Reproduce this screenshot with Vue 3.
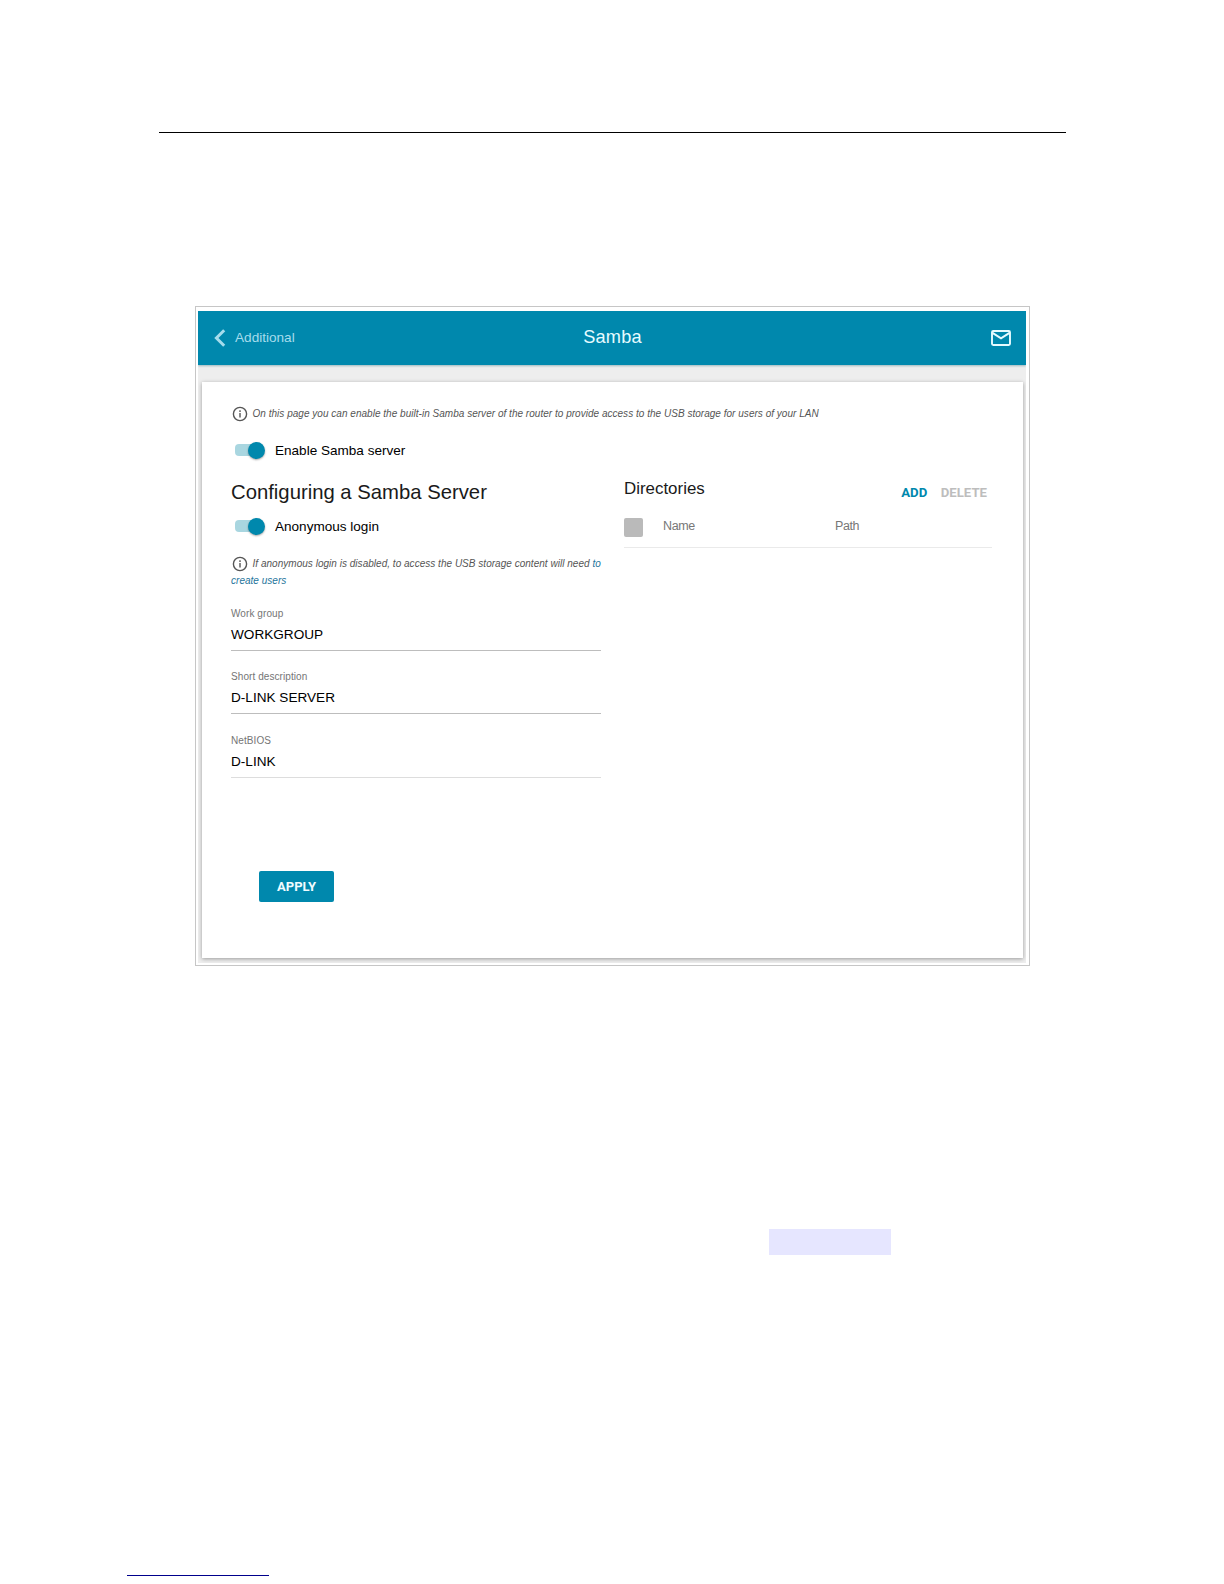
<template>
  <div class="page">
    <div class="page-rule"></div>

    <div class="figure">
      <div class="screen">
        <header class="topbar">
          <div class="back">
            <svg class="back-icon" viewBox="0 0 12 18">
              <path d="M10.2 1.2L2.4 9l7.8 7.8" fill="none" stroke="#a5dcec" stroke-width="3" />
            </svg>
            <span class="back-text">Additional</span>
          </div>
          <h1 class="topbar-title">Samba</h1>
          <div class="topbar-actions">
            <svg class="mail-icon" viewBox="0 0 20 16">
              <rect x="1" y="1" width="18" height="14" rx="1.2" fill="none" stroke="#e6fbff" stroke-width="1.9" />
              <path d="M1.5 2.8L10 8.4l8.5-5.6" fill="none" stroke="#e6fbff" stroke-width="2" />
            </svg>
          </div>
        </header>

        <main class="card">
          <p class="hint hint-page">
            <svg class="info-icon" viewBox="0 0 16 16">
              <circle cx="8" cy="8" r="6.6" />
              <path d="M8 7v4.5M8 4.3v1.6" />
            </svg>
            <span>On this page you can enable the built-in Samba server of the router to provide access to the USB storage for users of your LAN</span>
          </p>

          <div class="switch-row">
            <button class="switch" :class="{ on: enabled }" @click="enabled = !enabled"></button>
            <span>Enable Samba server</span>
          </div>

          <div class="columns">
            <section class="config">
              <h2>Configuring a Samba Server</h2>
              <div class="switch-row">
                <button class="switch" :class="{ on: anonymous }" @click="anonymous = !anonymous"></button>
                <span>Anonymous login</span>
              </div>
              <p class="hint hint-login">
                <svg class="info-icon" viewBox="0 0 16 16">
                  <circle cx="8" cy="8" r="6.6" />
                  <path d="M8 7v4.5M8 4.3v1.6" />
                </svg>
                <span>If anonymous login is disabled, to access the USB storage content will need <a>to<br />create users</a></span>
              </p>
              <div
                v-for="field in fields"
                :key="field.label"
                class="field"
                :class="{ light: field.light }"
              >
                <label>{{ field.label }}</label>
                <div class="value">{{ field.value }}</div>
              </div>
            </section>

            <section class="directories">
              <div class="dir-header">
                <h3>Directories</h3>
                <button class="link-btn">ADD</button>
                <button class="link-btn disabled">DELETE</button>
              </div>
              <div class="dir-table">
                <span class="checkbox"></span>
                <span>Name</span>
                <span>Path</span>
              </div>
            </section>
          </div>

          <button class="apply">APPLY</button>
        </main>
      </div>
    </div>

    <div class="highlight"></div>
    <div class="footnote-rule"></div>
  </div>
</template>

<script setup>
import { ref } from 'vue'

const enabled = ref(true)
const anonymous = ref(true)

const fields = ref([
  { label: 'Work group', value: 'WORKGROUP' },
  { label: 'Short description', value: 'D-LINK SERVER' },
  { label: 'NetBIOS', value: 'D-LINK', light: true }
])
</script>

<style>
body {
  background: #fff;
}
</style>

<style scoped>
.page {
  display: flex;
  flex-direction: column;
  align-items: flex-start;
  box-sizing: border-box;
  width: 1224px;
  height: 1584px;
  padding-top: 132px;
  overflow: hidden;
  font-family: "Liberation Sans", Arial, sans-serif;
  color: #1a1a1a;
}

h1, h2, h3, p {
  margin: 0;
  font-weight: normal;
}

button {
  padding: 0;
  border: none;
  background: none;
  cursor: pointer;
}

.page-rule {
  width: 907px;
  height: 1px;
  margin-left: 159px;
  background: #000;
}

.figure {
  box-sizing: border-box;
  width: 835px;
  height: 660px;
  margin: 173px 0 0 195px;
  padding: 4px 3px 2px 2px;
  border: 1px solid #c6c6c6;
}

.screen {
  height: 652px;
  background: #eee;
  overflow: hidden;
}

/* 顶部栏 */
.topbar {
  display: grid;
  grid-template-columns: 1fr auto 1fr;
  align-items: center;
  height: 54px;
  padding: 0 15px 0 16px;
  box-sizing: border-box;
  background: #0088ad;
  box-shadow: 0 1px 2px rgba(0, 80, 100, 0.35);
}

.back {
  display: flex;
  align-items: center;
  gap: 9px;
}

.back-icon {
  width: 12px;
  height: 18px;
}

.back-text {
  padding-bottom: 2px;
  font-size: 13.6px;
  color: #a5dcec;
}

.topbar-title {
  padding-bottom: 2px;
  font-size: 18.2px;
  letter-spacing: 0.15px;
  line-height: 24px;
  color: #e6fbff;
}

.topbar-actions {
  display: flex;
  justify-content: flex-end;
}

.mail-icon {
  width: 20px;
  height: 16px;
}

.card {
  box-sizing: border-box;
  height: 576px;
  margin: 17px 3px 0 4px;
  padding: 22px 31px 0 29px;
  background: #fff;
  box-shadow: 0 1px 4px rgba(0, 0, 0, 0.35);
}

/* 提示文字 */
.hint {
  font-size: 10px;
  font-style: italic;
  letter-spacing: 0.025px;
  color: #555;
  white-space: nowrap;
}

.hint a {
  color: #25749b;
}

.info-icon {
  width: 16px;
  height: 16px;
  margin: 0 4.5px 0 1px;
  vertical-align: middle;
  fill: none;
  stroke: #555;
  stroke-width: 1.4;
}

.hint-page {
  height: 20px;
  line-height: 20px;
}

.hint-login {
  height: 33px;
  margin-top: 19px;
  line-height: 17px;
}

/* 开关 */
.switch-row {
  display: flex;
  align-items: center;
  gap: 10px;
  height: 20px;
  font-size: 13.55px;
  color: #000;
}

.hint-page + .switch-row {
  margin-top: 16px;
}

.switch {
  display: flex;
  align-items: center;
  width: 30px;
  height: 12px;
  margin-left: 4px;
  border-radius: 4px;
  background: #ccc;
}

.switch.on {
  justify-content: flex-end;
  background: linear-gradient(90deg, #a9d6e0 80%, transparent 80%);
}

.switch::after {
  content: '';
  width: 17px;
  height: 17px;
  flex-shrink: 0;
  border-radius: 50%;
  background: #0088ad;
  box-shadow: 0 1px 2px rgba(0, 0, 0, 0.35);
}

.columns {
  display: grid;
  grid-template-columns: 370px 368px;
  gap: 23px;
  margin-top: 20px;
}

.config h2 {
  margin-bottom: 12px;
  font-size: 20.3px;
  line-height: 24px;
}

.field {
  height: 43px;
  margin-top: 19.6px;
  border-bottom: 1px solid #bdbdbd;
}

.hint-login + .field {
  margin-top: 18.8px;
}

.field.light {
  border-bottom-color: #ddd;
}

.field label {
  display: block;
  margin-bottom: 6px;
  font-size: 10px;
  letter-spacing: 0.08px;
  line-height: 14px;
  color: #757575;
}

.field .value {
  font-size: 13.6px;
  line-height: 16px;
  color: #000;
}

/* 目录列表 */
.dir-header {
  display: flex;
  align-items: flex-start;
  height: 30px;
  padding-right: 5px;
}

.dir-header h3 {
  flex: 1;
  font-size: 16.9px;
  line-height: 17px;
}

.link-btn {
  margin: 5px 0 0 13.5px;
  font-family: Roboto, sans-serif;
  font-size: 13.2px;
  font-weight: 700;
  line-height: 16px;
  color: #0088ad;
}

.link-btn.disabled {
  color: #bdbdbd;
}

.dir-table {
  display: grid;
  grid-template-columns: 39px 172px 1fr;
  height: 38px;
  padding-top: 8px;
  box-sizing: border-box;
  border-bottom: 1px solid #eaeaea;
  font-size: 12.5px;
  letter-spacing: -0.4px;
  line-height: 17px;
  color: #777;
}

.checkbox {
  width: 19px;
  height: 19px;
  border-radius: 2px;
  background: #bababa;
}

.apply {
  display: block;
  width: 75px;
  height: 31px;
  margin: 93px 0 0 28px;
  border-radius: 2px;
  background: #0088ad;
  font-family: Roboto, sans-serif;
  font-size: 13px;
  font-weight: 700;
  color: #f0fcff;
}

.highlight {
  width: 122px;
  height: 26px;
  margin: 263px 0 0 769px;
  background: #e6e6ff;
}

.footnote-rule {
  width: 142px;
  height: 1px;
  margin: 320px 0 0 127px;
  background: #00008c;
}
</style>
